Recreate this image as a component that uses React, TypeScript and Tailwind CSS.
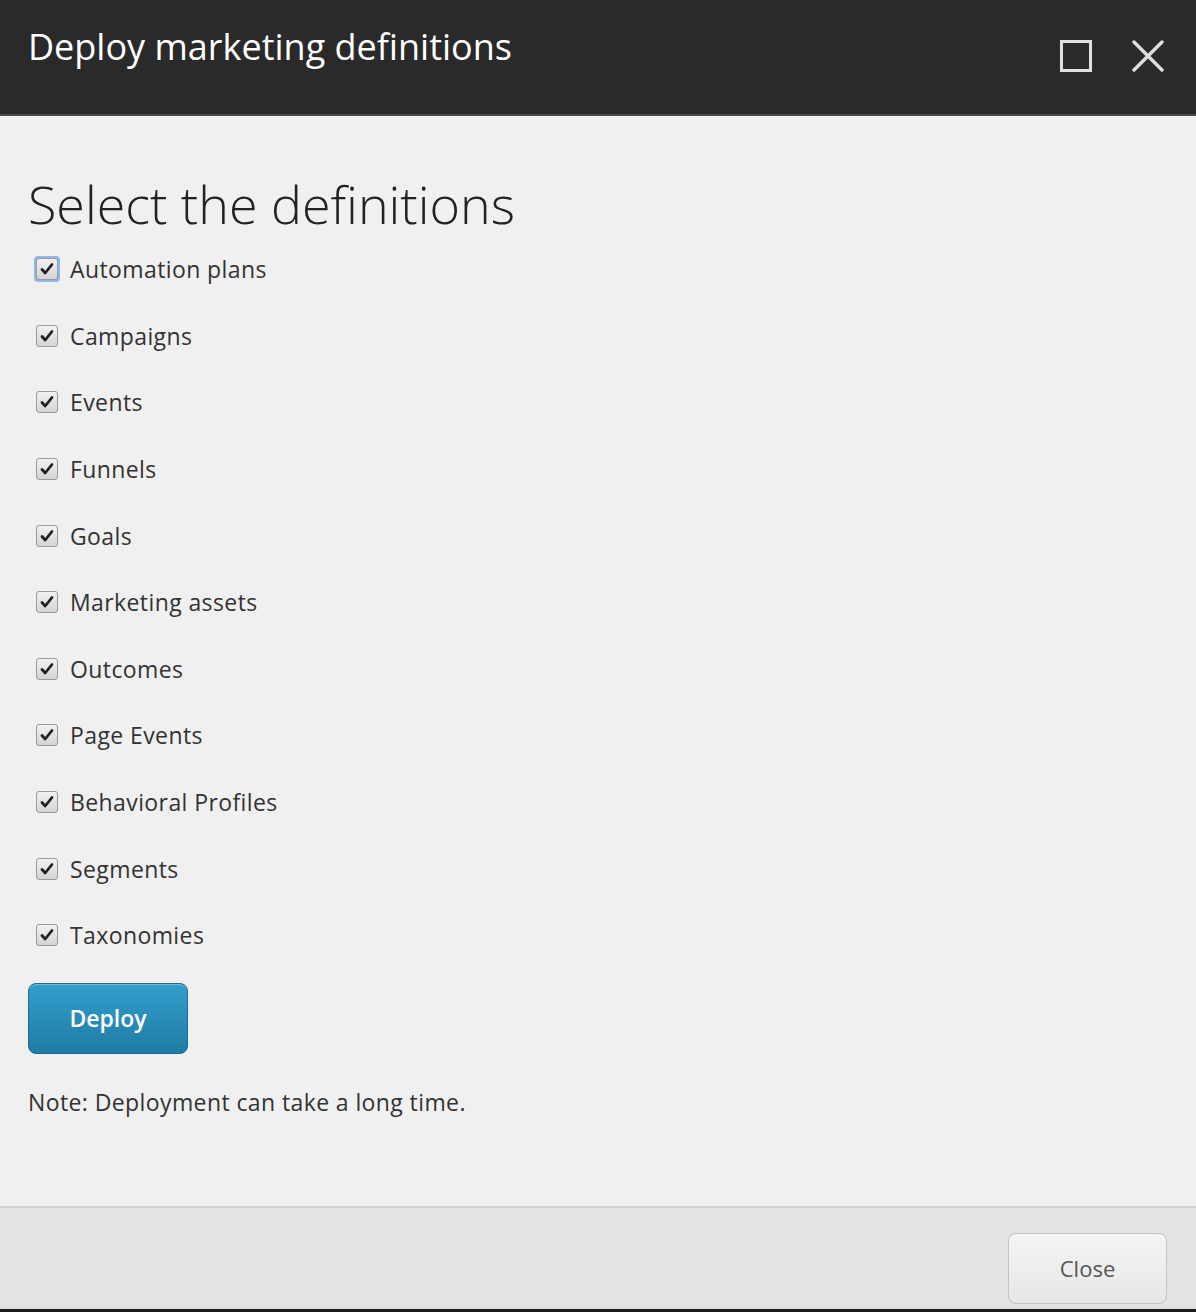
import React from 'react';

const items = [
  'Automation plans',
  'Campaigns',
  'Events',
  'Funnels',
  'Goals',
  'Marketing assets',
  'Outcomes',
  'Page Events',
  'Behavioral Profiles',
  'Segments',
  'Taxonomies',
];

const CheckBox: React.FC<{ focused?: boolean }> = ({ focused }) => (
  <span
    className={`flex h-[26px] w-[26px] items-center justify-center rounded-[4px] ${
      focused ? 'bg-[#8fb8f0] p-[2px]' : 'p-[2px]'
    }`}
  >
    <span className="flex h-[22px] w-[22px] items-center justify-center rounded-[3px] border border-[#9a9a9a] bg-gradient-to-b from-[#f2f2f2] to-[#d4d4d4]">
      <svg viewBox="0 0 16 16" className="h-[16px] w-[16px]">
        <path d="M3 8.5 L6.2 12 L13 3.5" fill="none" stroke="#222" strokeWidth="2.8" strokeLinecap="round" strokeLinejoin="round" />
      </svg>
    </span>
  </span>
);

export default function App() {
  return (
    <div className="flex h-[1312px] w-[1196px] flex-col bg-[#f0f0f0] font-['Open_Sans',sans-serif]">
      {/* Header */}
      <div className="flex h-[116px] shrink-0 items-start justify-between border-b-2 border-[#4a4a4a] bg-[#2a2a2a] pl-[28px] pr-[32px]">
        <h1 className="mt-[23px] text-[36px] leading-[48px] text-white">
          Deploy marketing definitions
        </h1>
        <div className="mt-[40px] flex items-center gap-[40px]">
          <svg viewBox="0 0 32 32" className="h-[32px] w-[32px]">
            <rect x="1.5" y="1.5" width="29" height="29" fill="none" stroke="#e0e0e0" strokeWidth="3" />
          </svg>
          <svg viewBox="0 0 32 32" className="h-[32px] w-[32px]">
            <path d="M2 2 L30 30 M30 2 L2 30" fill="none" stroke="#e0e0e0" strokeWidth="3.4" strokeLinecap="round" />
          </svg>
        </div>
      </div>

      {/* Body */}
      <div className="flex flex-1 flex-col pl-[28px] pt-[54px]">
        <h2 className="text-[52px] font-light leading-[68px] text-[#222]">Select the definitions</h2>
        <div className="mt-[-2px] flex flex-col pl-[6px]">
          {items.map((item, i) => (
            <label key={item} className="flex h-[66.6px] items-center gap-[10px]">
              <CheckBox focused={i === 0} />
              <span className="text-[23px] leading-[28px] tracking-[0.4px] text-[#333]">{item}</span>
            </label>
          ))}
        </div>
        <button className="mt-[14px] h-[71px] w-[160px] rounded-[8px] border border-[#1d6b8e] bg-gradient-to-b from-[#329ecb] to-[#1f7ca5] text-[23px] font-semibold text-white shadow-[inset_0_1px_0_rgba(255,255,255,0.3)]">
          Deploy
        </button>
        <p className="mt-[33px] text-[23px] leading-[30px] tracking-[0.4px] text-[#333]">
          Note: Deployment can take a long time.
        </p>
      </div>

      {/* Footer */}
      <div className="flex h-[106px] shrink-0 items-center justify-end border-t-2 border-[#d2d2d2] border-b-[3px] border-b-[#1c1c1c] bg-[#e3e3e3] pr-[29px]">
        <button className="mt-[20px] h-[71px] w-[159px] rounded-[8px] border border-[#c4c4c4] bg-gradient-to-b from-[#f5f5f5] to-[#e6e6e6] text-[22px] text-[#555]">
          Close
        </button>
      </div>
    </div>
  );
}
